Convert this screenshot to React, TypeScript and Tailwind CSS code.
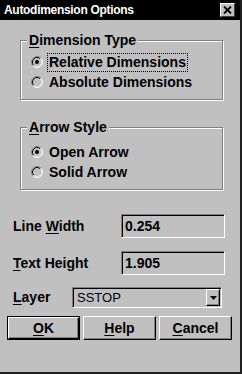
import React from "react";

const font = { fontFamily: '"Liberation Sans", Arial, sans-serif' };

function Radio({ checked }: { checked?: boolean }) {
  return (
    <svg width="12" height="12" viewBox="0 0 12 12" className="shrink-0">
      <circle cx="6" cy="6" r="5" fill="#c0c0c0" />
      <path d="M2.11 9.89 A5.5 5.5 0 0 1 9.89 2.11" stroke="#808080" strokeWidth="1" fill="none" />
      <path d="M9.89 2.11 A5.5 5.5 0 0 1 2.11 9.89" stroke="#ffffff" strokeWidth="1" fill="none" />
      <path d="M2.82 9.18 A4.5 4.5 0 0 1 9.18 2.82" stroke="#000000" strokeWidth="1" fill="none" />
      <path d="M9.18 2.82 A4.5 4.5 0 0 1 2.82 9.18" stroke="#dfdfdf" strokeWidth="1" fill="none" />
      {checked && <circle cx="6" cy="6" r="2" fill="#000" />}
    </svg>
  );
}

function RadioRow({ label, checked, focus }: { label: string; checked?: boolean; focus?: boolean }) {
  return (
    <div className="flex h-[20px] items-center">
      <Radio checked={checked} />
      <span
        className={
          "ml-[4px] px-[1px] leading-[17px] " +
          (focus ? "border border-dotted border-black" : "border border-transparent")
        }
      >
        {label}
      </span>
    </div>
  );
}

function Group({
  title,
  u,
  children,
  mt,
  pt,
}: {
  title: string;
  u: string;
  children: React.ReactNode;
  mt: string;
  pt: string;
}) {
  return (
    <fieldset
      className={
        "ml-[20px] w-[203px] border border-[#808080] px-0 shadow-[inset_1px_1px_0_#fff,1px_1px_0_#fff] " + mt
      }
    >
      <legend className="ml-[6px] bg-[#c0c0c0] px-[2px] leading-[16px]">
        <span className="underline underline-offset-2">{u}</span>
        {title}
      </legend>
      <div className={"pl-[10px] pb-[7px] " + pt}>{children}</div>
    </fieldset>
  );
}

function Sunken({ children, className }: { children: React.ReactNode; className: string }) {
  return (
    <div
      className={
        "flex items-center border border-t-[#808080] border-l-[#808080] border-b-white border-r-white bg-[#c0c0c0] shadow-[inset_1px_1px_0_#000] " +
        className
      }
    >
      {children}
    </div>
  );
}

function Button({ u, rest, def }: { u: string; rest: string; def?: boolean }) {
  return (
    <div className={"h-[24px] w-[73px] " + (def ? "border border-black" : "")}>
      <div className="flex h-full w-full items-center justify-center border border-t-white border-l-white border-b-black border-r-black shadow-[inset_-1px_-1px_0_#808080]">
        <span className="underline underline-offset-2">{u}</span>
        {rest}
      </div>
    </div>
  );
}

export default function App() {
  return (
    <div
      style={font}
      className="flex h-[374px] w-[242px] flex-col overflow-hidden border-r-2 border-b-2 border-r-[#202020] border-b-[#202020] bg-[#c0c0c0] text-[14px] font-bold text-black"
    >
      <div className="flex h-[20px] shrink-0 items-center justify-between bg-black pl-[4px] pr-[5px]">
        <span className="text-[12px] tracking-[-0.3px] text-white">Autodimension Options</span>
        <div className="flex h-[14px] w-[15px] items-center justify-center border border-t-white border-l-white border-b-[#404040] border-r-[#404040] bg-[#c0c0c0]">
          <svg width="9" height="8" viewBox="0 0 9 8">
            <path d="M1 0.5 L8 7.5 M8 0.5 L1 7.5" stroke="#000" strokeWidth="1.8" />
          </svg>
        </div>
      </div>

      <Group title="imension Type" u="D" mt="mt-[12px]" pt="pt-[4px]">
        <RadioRow label="Relative Dimensions" checked focus />
        <RadioRow label="Absolute Dimensions" />
      </Group>

      <Group title="rrow Style" u="A" mt="mt-[19px]" pt="pt-[7px]">
        <RadioRow label="Open Arrow" checked />
        <RadioRow label="Solid Arrow" />
      </Group>

      <div className="mt-[24px] flex h-[24px] items-center pl-[13px]">
        <span className="w-[108px]">
          Line <span className="underline underline-offset-2">W</span>idth
        </span>
        <Sunken className="h-[24px] w-[104px] pl-[3px]">0.254</Sunken>
      </div>

      <div className="mt-[13px] flex h-[24px] items-center pl-[13px]">
        <span className="w-[108px]">
          <span className="underline underline-offset-2">T</span>ext Height
        </span>
        <Sunken className="h-[24px] w-[104px] pl-[3px]">1.905</Sunken>
      </div>

      <div className="mt-[12px] flex h-[21px] items-center pl-[13px]">
        <span className="w-[59px]">
          <span className="underline underline-offset-2">L</span>ayer
        </span>
        <Sunken className="h-[21px] w-[150px] justify-between pl-[4px] pr-[1px]">
          <span className="text-[13px] font-normal">SSTOP</span>
          <div className="flex h-[17px] w-[14px] items-center justify-center border border-t-white border-l-white border-b-black border-r-black shadow-[inset_-1px_-1px_0_#808080]">
            <svg width="7" height="4" viewBox="0 0 7 4">
              <path d="M0 0 H7 L3.5 4 Z" fill="#000" />
            </svg>
          </div>
        </Sunken>
      </div>

      <div className="mt-[8px] flex gap-[3px] pl-[7px]">
        <Button u="O" rest="K" def />
        <Button u="H" rest="elp" />
        <Button u="C" rest="ancel" />
      </div>
    </div>
  );
}
